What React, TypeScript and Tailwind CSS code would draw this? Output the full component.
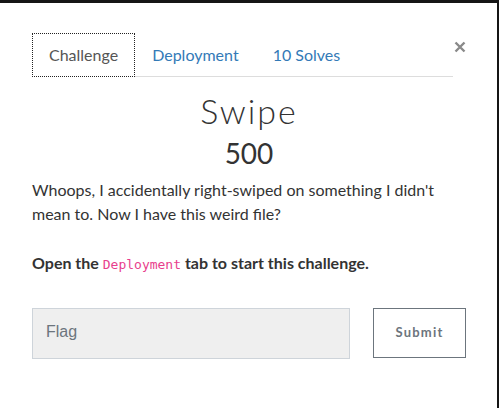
export default function App() {
  return (
    <div className="w-[499px] h-[408px] bg-[#151515] pt-[3px] pr-[2px] overflow-hidden">
      <div className="h-full bg-white pl-[32px] pr-[31px] pt-[30px] font-['Lato',sans-serif] text-[#333]">
        {/* tabs + close */}
        <div className="flex items-start">
          <nav className="flex flex-1 border-b border-[#dddddd] text-[16px] leading-[24px]">
            <button className="-mb-px px-[16px] py-[9px] border border-dotted border-[#222] text-[#555] bg-white">
              Challenge
            </button>
            <button className="px-[17px] py-[9px] text-[#337ab7]">Deployment</button>
            <button className="px-[17px] py-[9px] text-[#337ab7]">10 Solves</button>
          </nav>
          <button className="ml-[1px] mt-[8px] w-[12px] h-[12px] text-[#8a8a8a]">
            <svg viewBox="0 0 12 12" width="12" height="12">
              <path d="M1.5 1.5 L10.5 10.5 M10.5 1.5 L1.5 10.5" stroke="currentColor" strokeWidth="2.4" />
            </svg>
          </button>
        </div>

        {/* title */}
        <h2 className="mt-[14px] text-center text-[34px] leading-[40px] font-light tracking-[2px] text-[#333]">
          Swipe
        </h2>
        <h3 className="mt-[5px] text-center text-[28px] leading-[34px] text-[#333]">500</h3>

        <p className="mt-[8px] text-[16px] leading-[24px] text-[#333]">
          Whoops, I accidentally right-swiped on something I didn't mean to. Now I have this weird file?
        </p>
        <p className="mt-[25px] text-[16px] leading-[24px] font-bold text-[#333]">
          Open the{" "}
          <code className="font-['DejaVu_Sans_Mono',monospace] text-[13px] font-normal text-[#e83e8c]">
            Deployment
          </code>{" "}
          tab to start this challenge.
        </p>

        {/* flag form */}
        <div className="mt-[31px] flex items-start">
          <input
            placeholder="Flag"
            className="shrink-0 w-[318px] h-[51px] bg-[#efefef] border border-[#ced4da] px-[13px] pb-[4px] font-['Liberation_Sans',sans-serif] text-[16px] text-[#495057] placeholder:text-[#6c757d] outline-none"
          />
          <button className="shrink-0 ml-[23px] w-[93px] h-[50px] border border-[#6c757d] text-[13px] font-bold tracking-[1.2px] text-[#6c757d]">
            Submit
          </button>
        </div>
      </div>
    </div>
  );
}
